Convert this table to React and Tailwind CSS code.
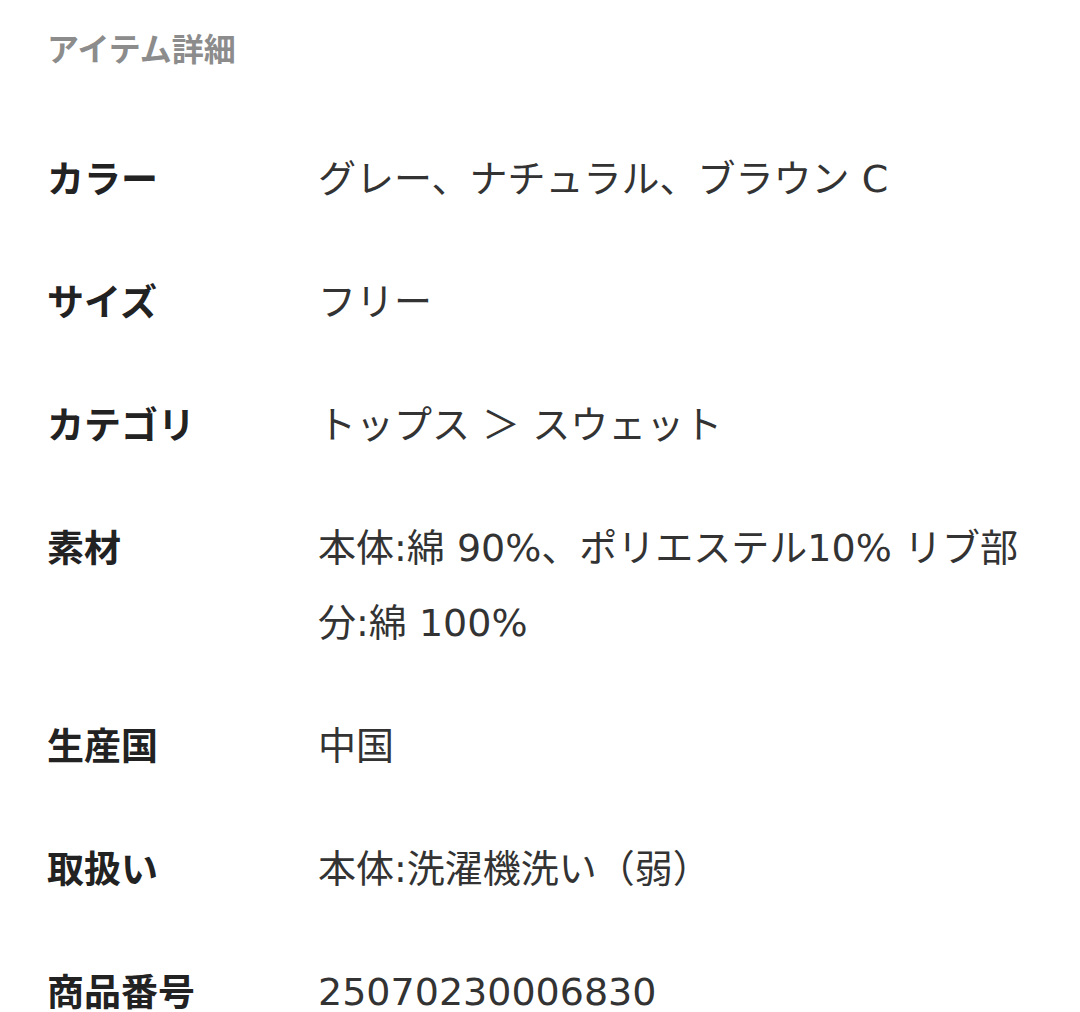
import React from 'react';

const rows = [
  { label: 'カラー', value: 'グレー、ナチュラル、ブラウン C' },
  { label: 'サイズ', value: 'フリー' },
  { label: 'カテゴリ', value: 'トップス ＞ スウェット' },
  { label: '素材', value: '本体:綿 90%、ポリエステル10% リブ部分:綿 100%' },
  { label: '生産国', value: '中国' },
  { label: '取扱い', value: '本体:洗濯機洗い（弱）' },
  { label: '商品番号', value: '25070230006830' },
];

export default function App() {
  return (
    <div
      className="w-[1080px] h-[1012px] overflow-hidden bg-white pl-[47px] pr-[46px] pt-[27px]"
      style={{ fontFamily: '"Noto Sans CJK JP", "Noto Sans", sans-serif' }}
    >
      {/* 見出し */}
      <h2 className="text-[32px] leading-[40px] font-bold text-[#8c8c8c]">アイテム詳細</h2>

      <div className="mt-[73px] flex flex-col gap-[48px]">
        {rows.map((row) => (
          <div key={row.label} className="grid grid-cols-[271px_1fr] leading-[75px]">
            <div className="text-[37px] font-bold text-[#222]">{row.label}</div>
            <div className="translate-y-[2px] text-[38px] font-['DejaVu_Sans','Noto_Sans_CJK_JP',sans-serif] text-[#333]">
              {row.value}
            </div>
          </div>
        ))}
      </div>
    </div>
  );
}
